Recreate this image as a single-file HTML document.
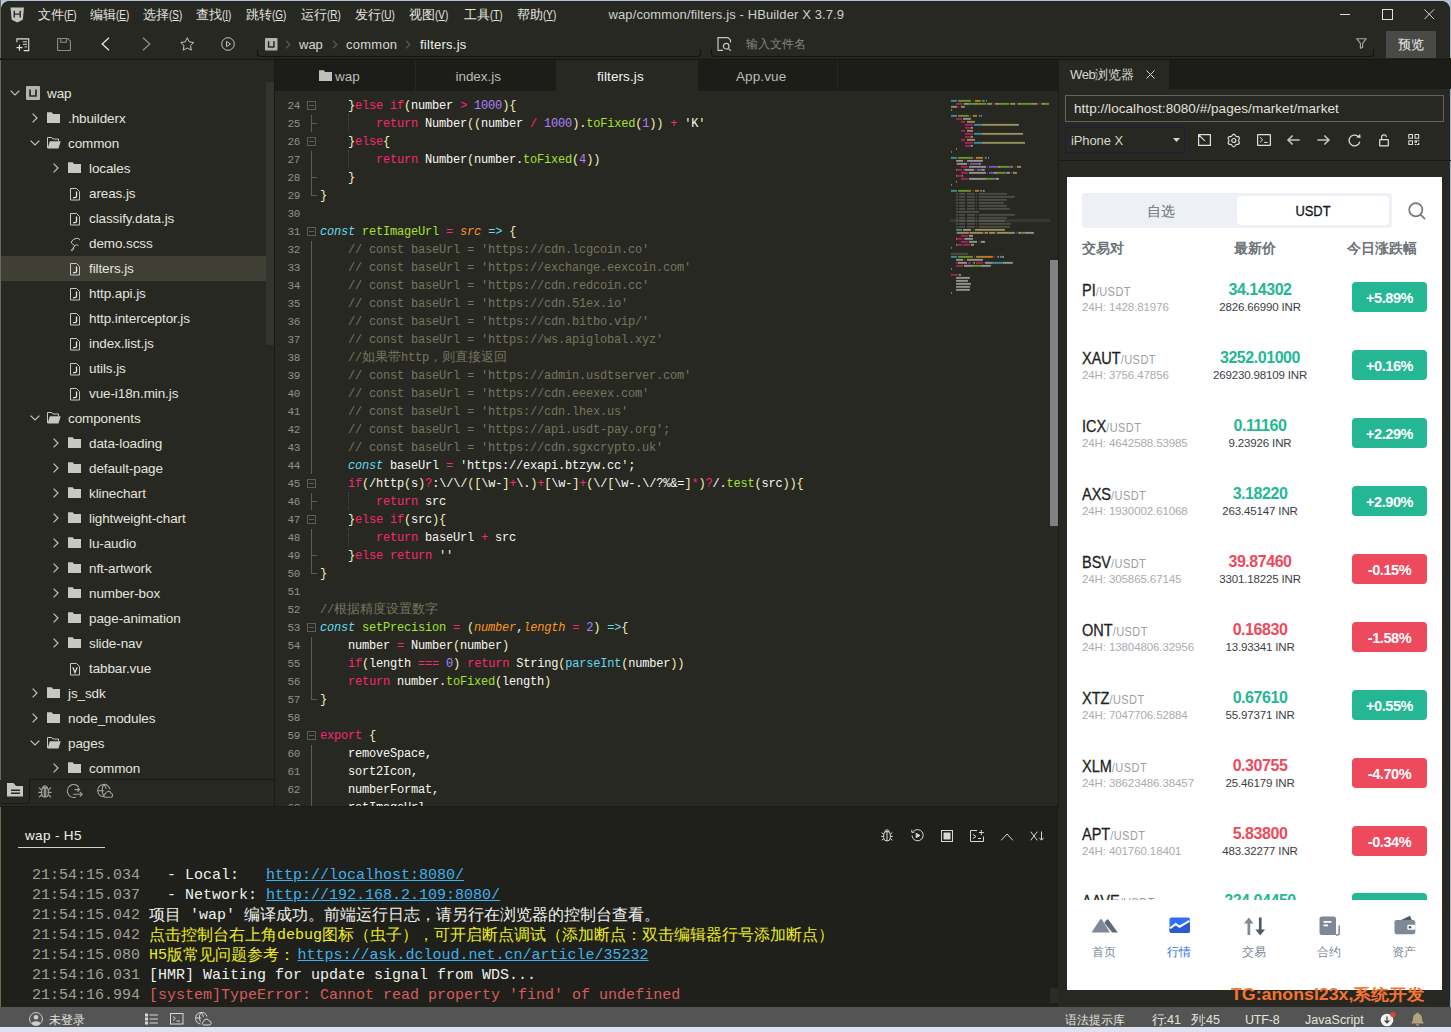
<!DOCTYPE html><html><head><meta charset="utf-8"><title>HBuilder X</title><style>
*{box-sizing:border-box;margin:0;padding:0}
html,body{width:1451px;height:1032px;overflow:hidden;background:#272822}
body{position:relative;font-family:"Liberation Sans",sans-serif;color:#d8d8d2;font-size:13px}
.abs{position:absolute}
.t{position:absolute;white-space:nowrap;line-height:1}
.cj{display:inline-block;overflow:hidden;white-space:nowrap;vertical-align:top}
svg{position:absolute;overflow:visible}
/* code */
.code{position:absolute;left:320px;top:95px;font-family:"Liberation Mono",monospace;font-size:12px;letter-spacing:-0.2px;color:#f8f8f2;white-space:pre}
.code div{height:18px;line-height:18px}
.ln{position:absolute;left:275px;top:95px;width:25px;text-align:right;font-family:"Liberation Mono",monospace;font-size:11px;letter-spacing:-0.4px;color:#8f908a}
.ln div{height:18px;line-height:18px}
.k{color:#f92672}.n{color:#ae81ff}.f{color:#a6e22e}.c{color:#66d9ef;font-style:italic}.p{color:#fd971f;font-style:italic}
.m{color:#78745f}.cjk{font-size:13px;letter-spacing:0}.y{color:#f3f0b4}.b{color:#66d9ef}
.con{position:absolute;left:32px;top:866px;font-family:"Liberation Mono",monospace;font-size:15px;color:#f0f0ea;white-space:pre}
.con div{height:20px;line-height:20px}
.ts{color:#a0a096}
.lk{color:#3eb2ee;text-decoration:underline}
.yl{color:#ecec20}.rd{color:#d75c5c}
.row{position:absolute;left:0;width:266px;height:25px}
.row .t{top:5px;font-size:14px;color:#e4e4de}
</style></head><body>
<div class="abs" style="left:0px;top:0px;width:1451px;height:1px;background:#aebfd6;"></div>
<div class="abs" style="left:0px;top:0px;width:1px;height:1032px;background:#6b6a55;"></div>
<div class="abs" style="left:1450px;top:0px;width:1px;height:1032px;background:#aab4c2;"></div>
<svg style="left:9.500px;top:7px" width="14.500" height="16" viewBox="0 0 17 19"><path d="M0.5 0.5h16l-1.4 14.6L8.5 18.5 1.9 15.1z" fill="#c2c2be"/><path d="M5 4.5v8M12 4.5v8M5 8.5h7" stroke="#272822" stroke-width="1.7" fill="none"/></svg>
<div class="t" style="left:38px;top:7.5px;font-size:13px;color:#e6e6e0;"><span class="cj" style="width:26px;">文件</span><span style="display:inline-block;transform:scaleX(0.76);transform-origin:left">(<u>F</u>)</span></div>
<div class="t" style="left:89.5px;top:7.5px;font-size:13px;color:#e6e6e0;"><span class="cj" style="width:26px;">编辑</span><span style="display:inline-block;transform:scaleX(0.76);transform-origin:left">(<u>E</u>)</span></div>
<div class="t" style="left:142.5px;top:7.5px;font-size:13px;color:#e6e6e0;"><span class="cj" style="width:26px;">选择</span><span style="display:inline-block;transform:scaleX(0.76);transform-origin:left">(<u>S</u>)</span></div>
<div class="t" style="left:195.5px;top:7.5px;font-size:13px;color:#e6e6e0;"><span class="cj" style="width:26px;">查找</span><span style="display:inline-block;transform:scaleX(0.76);transform-origin:left">(<u>I</u>)</span></div>
<div class="t" style="left:245.5px;top:7.5px;font-size:13px;color:#e6e6e0;"><span class="cj" style="width:26px;">跳转</span><span style="display:inline-block;transform:scaleX(0.76);transform-origin:left">(<u>G</u>)</span></div>
<div class="t" style="left:300.5px;top:7.5px;font-size:13px;color:#e6e6e0;"><span class="cj" style="width:26px;">运行</span><span style="display:inline-block;transform:scaleX(0.76);transform-origin:left">(<u>R</u>)</span></div>
<div class="t" style="left:354.5px;top:7.5px;font-size:13px;color:#e6e6e0;"><span class="cj" style="width:26px;">发行</span><span style="display:inline-block;transform:scaleX(0.76);transform-origin:left">(<u>U</u>)</span></div>
<div class="t" style="left:409px;top:7.5px;font-size:13px;color:#e6e6e0;"><span class="cj" style="width:26px;">视图</span><span style="display:inline-block;transform:scaleX(0.76);transform-origin:left">(<u>V</u>)</span></div>
<div class="t" style="left:463.5px;top:7.5px;font-size:13px;color:#e6e6e0;"><span class="cj" style="width:26px;">工具</span><span style="display:inline-block;transform:scaleX(0.76);transform-origin:left">(<u>T</u>)</span></div>
<div class="t" style="left:516.5px;top:7.5px;font-size:13px;color:#e6e6e0;"><span class="cj" style="width:26px;">帮助</span><span style="display:inline-block;transform:scaleX(0.76);transform-origin:left">(<u>Y</u>)</span></div>
<div class="t" style="left:608.5px;top:8px;font-size:13px;color:#d0d0ca;letter-spacing:0.11px">wap/common/filters.js - HBuilder X 3.7.9</div>
<div class="abs" style="left:1340px;top:14px;width:10px;height:1px;background:#e0e0da;"></div>
<div class="abs" style="left:1382px;top:9px;width:10.500px;height:10.500px;border:1px solid #e0e0da"></div>
<svg style="left:1424px;top:8.700px" width="10.500" height="10.500" viewBox="0 0 12 12"><path d="M0.5 0.5l11 11M11.5 0.5l-11 11" stroke="#e0e0da" stroke-width="1.1" fill="none"/></svg>
<div class="abs" style="left:0px;top:58px;width:1451px;height:1px;background:#22231d;"></div>
<div class="abs" style="left:0px;top:59px;width:1451px;height:1px;background:#171813;"></div>
<svg style="left:16px;top:37.500px" width="14.500" height="13.500" viewBox="0 0 17 16" fill="none" stroke="#e0e0da" stroke-width="1.3"><path d="M1 5V1h14v14H9"/><path d="M8 4.5h5M8 7.5h5M10 10.5h3" stroke-width="1.1"/><path d="M4 8v7M0.5 11.5h7" stroke-width="1.4"/></svg>
<svg style="left:57px;top:37.500px" width="14" height="13" viewBox="0 0 15 14" fill="none" stroke="#8b8b85" stroke-width="1.2"><path d="M0.6 0.6h11l2.8 2.8v10H0.6z"/><path d="M4 0.6v4h6v-4"/></svg>
<svg style="left:101px;top:37px" width="9" height="14" viewBox="0 0 9 14" fill="none" stroke="#e0e0da" stroke-width="1.4"><path d="M8 0.7L1.2 7 8 13.3"/></svg>
<svg style="left:142px;top:37px" width="9" height="14" viewBox="0 0 9 14" fill="none" stroke="#8b8b85" stroke-width="1.4"><path d="M1 0.7L7.8 7 1 13.3"/></svg>
<svg style="left:180px;top:37px" width="14.500" height="13.500" viewBox="0 0 16 15" fill="none" stroke="#c8c8c2" stroke-width="1.1" stroke-linejoin="round"><path d="M8 0.8l2.2 4.6 5 .7-3.6 3.5.9 5L8 12.2 3.5 14.6l.9-5L.8 6.1l5-.7z"/></svg>
<svg style="left:221px;top:37px" width="14" height="14" viewBox="0 0 16 16" fill="none" stroke="#c8c8c2" stroke-width="1.1" stroke-linejoin="round"><circle cx="8" cy="8" r="7.2"/><path d="M6.3 5l4.6 3-4.6 3z"/></svg>
<div class="abs" style="left:257px;top:49px;width:444px;height:8px;border:1px solid #12130e;border-top:none;border-radius:0 0 4px 4px"></div>
<div class="abs" style="left:711px;top:49px;width:663px;height:8px;border:1px solid #12130e;border-top:none;border-radius:0 0 4px 4px"></div>
<svg style="left:264.500px;top:38.200px" width="12.500" height="12.500" viewBox="0 0 14 14"><rect width="14" height="14" rx="1" fill="#b4b4ae"/><path d="M4 3.5v6.5h6V3.5" stroke="#272822" stroke-width="1.7" fill="none"/></svg>
<svg style="left:285px;top:40px" width="6" height="9" viewBox="0 0 6 9" fill="none" stroke="#5d5e58" stroke-width="1.1"><path d="M1 0.7l3.8 3.8L1 8.3"/></svg>
<svg style="left:332px;top:40px" width="6" height="9" viewBox="0 0 6 9" fill="none" stroke="#5d5e58" stroke-width="1.1"><path d="M1 0.7l3.8 3.8L1 8.3"/></svg>
<svg style="left:405px;top:40px" width="6" height="9" viewBox="0 0 6 9" fill="none" stroke="#5d5e58" stroke-width="1.1"><path d="M1 0.7l3.8 3.8L1 8.3"/></svg>
<div class="t" style="left:299px;top:38px;font-size:13px;color:#d8d8d2;">wap</div>
<div class="t" style="left:346px;top:38px;font-size:13px;color:#d8d8d2;letter-spacing:0.25px">common</div>
<div class="t" style="left:420px;top:38px;font-size:13px;color:#f0f0ea;letter-spacing:0.25px">filters.js</div>
<svg style="left:717px;top:37px" width="15" height="15" viewBox="0 0 15 15" fill="none" stroke="#c8c8c2" stroke-width="1.2"><path d="M13.5 5.5V3.2L11 0.7H1v12.6h5"/><circle cx="9.2" cy="9.2" r="2.8"/><path d="M11.3 11.3l2.5 2.5"/></svg>
<div class="t" style="left:746px;top:38px;font-size:12px;color:#85857f;"><span class="cj" style="width:60px;">输入文件名</span></div>
<svg style="left:1356px;top:38px" width="11" height="11" viewBox="0 0 11 11" fill="none" stroke="#a8a8a2" stroke-width="1.1" stroke-linejoin="round"><path d="M0.7 0.7h9.6L6.6 5.4v4.2L4.4 10.3V5.4z"/></svg>
<div class="abs" style="left:1386px;top:31px;width:50px;height:27px;background:#494948;"></div>
<div class="t" style="left:1398px;top:38px;font-size:13px;color:#f0f0ea;"><span class="cj" style="width:26px;">预览</span></div>
<div class="abs" style="left:1px;top:1px;width:8px;height:8px;background:radial-gradient(circle at 100% 100%,transparent 7.500px,#b7c6da 8.300px)"></div>
<div class="abs" style="left:1442px;top:1px;width:8px;height:8px;background:radial-gradient(circle at 0 100%,transparent 7.500px,#b7c6da 8.300px)"></div>
<div class="abs" style="left:1px;top:256px;width:265px;height:25px;background:#3f3f35;"></div>
<svg style="left:9.8px;top:90px" width="10" height="6" viewBox="0 0 10 6" fill="none" stroke="#c4c4be" stroke-width="1.2"><path d="M0.6 0.6L5 5l4.4-4.4"/></svg>
<svg style="left:26px;top:86px" width="14" height="14" viewBox="0 0 14 14"><rect width="14" height="14" rx="1" fill="#b4b4ae"/><path d="M4 3.5v6.5h6V3.5" stroke="#272822" stroke-width="1.7" fill="none"/></svg>
<div class="t" style="left:47px;top:86.5px;font-size:13.5px;color:#e4e4de;letter-spacing:-0.1px">wap</div>
<svg style="left:31.799999999999997px;top:113px" width="6" height="10" viewBox="0 0 6 10" fill="none" stroke="#c4c4be" stroke-width="1.2"><path d="M0.6 0.6L5 5 0.6 9.4"/></svg>
<svg style="left:47px;top:112px" width="13" height="11" viewBox="0 0 13 11"><path d="M0 0.3h4.8l1.2 1.7h7v9H0z" fill="#c8c8c2"/></svg>
<div class="t" style="left:68px;top:111.5px;font-size:13.5px;color:#e4e4de;letter-spacing:-0.1px">.hbuilderx</div>
<svg style="left:29.799999999999997px;top:140px" width="10" height="6" viewBox="0 0 10 6" fill="none" stroke="#c4c4be" stroke-width="1.2"><path d="M0.6 0.6L5 5l4.4-4.4"/></svg>
<svg style="left:47px;top:137px" width="14" height="12" viewBox="0 0 14 12"><path d="M0.5 11V0.5h4.3l1.2 1.5h5.5v2" fill="none" stroke="#c8c8c2" stroke-width="1"/><path d="M0.6 11.5L2.8 4.2h10.9L11.5 11.5z" fill="#c8c8c2"/></svg>
<div class="t" style="left:68px;top:136.5px;font-size:13.5px;color:#e4e4de;letter-spacing:-0.1px">common</div>
<svg style="left:52.8px;top:163px" width="6" height="10" viewBox="0 0 6 10" fill="none" stroke="#c4c4be" stroke-width="1.2"><path d="M0.6 0.6L5 5 0.6 9.4"/></svg>
<svg style="left:68px;top:162px" width="13" height="11" viewBox="0 0 13 11"><path d="M0 0.3h4.8l1.2 1.7h7v9H0z" fill="#c8c8c2"/></svg>
<div class="t" style="left:89px;top:161.5px;font-size:13.5px;color:#e4e4de;letter-spacing:-0.1px">locales</div>
<svg style="left:70px;top:187.5px" width="10" height="12.500" viewBox="0 0 10 12.500" fill="none" stroke="#c8c8c2" stroke-width="1"><path d="M0.500 0.500h6l3 3v8.500h-9z"/><path d="M6.500 3.600v4.600q0 1.400-1.500 1.400H3" stroke-width="1.300" stroke="#e6e6e0"/></svg>
<div class="t" style="left:89px;top:186.5px;font-size:13.5px;color:#e4e4de;letter-spacing:-0.1px">areas.js</div>
<svg style="left:70px;top:212.5px" width="10" height="12.500" viewBox="0 0 10 12.500" fill="none" stroke="#c8c8c2" stroke-width="1"><path d="M0.500 0.500h6l3 3v8.500h-9z"/><path d="M6.500 3.600v4.600q0 1.400-1.500 1.400H3" stroke-width="1.300" stroke="#e6e6e0"/></svg>
<div class="t" style="left:89px;top:211.5px;font-size:13.5px;color:#e4e4de;letter-spacing:-0.1px">classify.data.js</div>
<svg style="left:69px;top:236.5px" width="12" height="14" viewBox="0 0 12 14" fill="none" stroke="#c8c8c2" stroke-width="1"><path d="M10.600 3.200C11 1.600 8.600 0.800 6 1.800 3.400 2.800 1.700 4.900 2.500 6.100c.8 1.200 2.700 1.400 3.100 2.600.4 1.200-.9 2-2.100 3-1.200 1-1.700 1.800-.9 2 .8.200 2-1.200 2-2.400 0-1.200-.6-1.800-.6-1.800M5.600 8.700c1.200-.9 3-1.100 3.800-.1"/></svg>
<div class="t" style="left:89px;top:236.5px;font-size:13.5px;color:#e4e4de;letter-spacing:-0.1px">demo.scss</div>
<svg style="left:70px;top:262.5px" width="10" height="12.500" viewBox="0 0 10 12.500" fill="none" stroke="#c8c8c2" stroke-width="1"><path d="M0.500 0.500h6l3 3v8.500h-9z"/><path d="M6.500 3.600v4.600q0 1.400-1.500 1.400H3" stroke-width="1.300" stroke="#e6e6e0"/></svg>
<div class="t" style="left:89px;top:261.5px;font-size:13.5px;color:#e4e4de;letter-spacing:-0.1px">filters.js</div>
<svg style="left:70px;top:287.5px" width="10" height="12.500" viewBox="0 0 10 12.500" fill="none" stroke="#c8c8c2" stroke-width="1"><path d="M0.500 0.500h6l3 3v8.500h-9z"/><path d="M6.500 3.600v4.600q0 1.400-1.500 1.400H3" stroke-width="1.300" stroke="#e6e6e0"/></svg>
<div class="t" style="left:89px;top:286.5px;font-size:13.5px;color:#e4e4de;letter-spacing:-0.1px">http.api.js</div>
<svg style="left:70px;top:312.5px" width="10" height="12.500" viewBox="0 0 10 12.500" fill="none" stroke="#c8c8c2" stroke-width="1"><path d="M0.500 0.500h6l3 3v8.500h-9z"/><path d="M6.500 3.600v4.600q0 1.400-1.500 1.400H3" stroke-width="1.300" stroke="#e6e6e0"/></svg>
<div class="t" style="left:89px;top:311.5px;font-size:13.5px;color:#e4e4de;letter-spacing:-0.1px">http.interceptor.js</div>
<svg style="left:70px;top:337.5px" width="10" height="12.500" viewBox="0 0 10 12.500" fill="none" stroke="#c8c8c2" stroke-width="1"><path d="M0.500 0.500h6l3 3v8.500h-9z"/><path d="M6.500 3.600v4.600q0 1.400-1.500 1.400H3" stroke-width="1.300" stroke="#e6e6e0"/></svg>
<div class="t" style="left:89px;top:336.5px;font-size:13.5px;color:#e4e4de;letter-spacing:-0.1px">index.list.js</div>
<svg style="left:70px;top:362.5px" width="10" height="12.500" viewBox="0 0 10 12.500" fill="none" stroke="#c8c8c2" stroke-width="1"><path d="M0.500 0.500h6l3 3v8.500h-9z"/><path d="M6.500 3.600v4.600q0 1.400-1.500 1.400H3" stroke-width="1.300" stroke="#e6e6e0"/></svg>
<div class="t" style="left:89px;top:361.5px;font-size:13.5px;color:#e4e4de;letter-spacing:-0.1px">utils.js</div>
<svg style="left:70px;top:387.5px" width="10" height="12.500" viewBox="0 0 10 12.500" fill="none" stroke="#c8c8c2" stroke-width="1"><path d="M0.500 0.500h6l3 3v8.500h-9z"/><path d="M6.500 3.600v4.600q0 1.400-1.500 1.400H3" stroke-width="1.300" stroke="#e6e6e0"/></svg>
<div class="t" style="left:89px;top:386.5px;font-size:13.5px;color:#e4e4de;letter-spacing:-0.1px">vue-i18n.min.js</div>
<svg style="left:29.799999999999997px;top:415px" width="10" height="6" viewBox="0 0 10 6" fill="none" stroke="#c4c4be" stroke-width="1.2"><path d="M0.6 0.6L5 5l4.4-4.4"/></svg>
<svg style="left:47px;top:412px" width="14" height="12" viewBox="0 0 14 12"><path d="M0.5 11V0.5h4.3l1.2 1.5h5.5v2" fill="none" stroke="#c8c8c2" stroke-width="1"/><path d="M0.6 11.5L2.8 4.2h10.9L11.5 11.5z" fill="#c8c8c2"/></svg>
<div class="t" style="left:68px;top:411.5px;font-size:13.5px;color:#e4e4de;letter-spacing:-0.1px">components</div>
<svg style="left:52.8px;top:438px" width="6" height="10" viewBox="0 0 6 10" fill="none" stroke="#c4c4be" stroke-width="1.2"><path d="M0.6 0.6L5 5 0.6 9.4"/></svg>
<svg style="left:68px;top:437px" width="13" height="11" viewBox="0 0 13 11"><path d="M0 0.3h4.8l1.2 1.7h7v9H0z" fill="#c8c8c2"/></svg>
<div class="t" style="left:89px;top:436.5px;font-size:13.5px;color:#e4e4de;letter-spacing:-0.1px">data-loading</div>
<svg style="left:52.8px;top:463px" width="6" height="10" viewBox="0 0 6 10" fill="none" stroke="#c4c4be" stroke-width="1.2"><path d="M0.6 0.6L5 5 0.6 9.4"/></svg>
<svg style="left:68px;top:462px" width="13" height="11" viewBox="0 0 13 11"><path d="M0 0.3h4.8l1.2 1.7h7v9H0z" fill="#c8c8c2"/></svg>
<div class="t" style="left:89px;top:461.5px;font-size:13.5px;color:#e4e4de;letter-spacing:-0.1px">default-page</div>
<svg style="left:52.8px;top:488px" width="6" height="10" viewBox="0 0 6 10" fill="none" stroke="#c4c4be" stroke-width="1.2"><path d="M0.6 0.6L5 5 0.6 9.4"/></svg>
<svg style="left:68px;top:487px" width="13" height="11" viewBox="0 0 13 11"><path d="M0 0.3h4.8l1.2 1.7h7v9H0z" fill="#c8c8c2"/></svg>
<div class="t" style="left:89px;top:486.5px;font-size:13.5px;color:#e4e4de;letter-spacing:-0.1px">klinechart</div>
<svg style="left:52.8px;top:513px" width="6" height="10" viewBox="0 0 6 10" fill="none" stroke="#c4c4be" stroke-width="1.2"><path d="M0.6 0.6L5 5 0.6 9.4"/></svg>
<svg style="left:68px;top:512px" width="13" height="11" viewBox="0 0 13 11"><path d="M0 0.3h4.8l1.2 1.7h7v9H0z" fill="#c8c8c2"/></svg>
<div class="t" style="left:89px;top:511.5px;font-size:13.5px;color:#e4e4de;letter-spacing:-0.1px">lightweight-chart</div>
<svg style="left:52.8px;top:538px" width="6" height="10" viewBox="0 0 6 10" fill="none" stroke="#c4c4be" stroke-width="1.2"><path d="M0.6 0.6L5 5 0.6 9.4"/></svg>
<svg style="left:68px;top:537px" width="13" height="11" viewBox="0 0 13 11"><path d="M0 0.3h4.8l1.2 1.7h7v9H0z" fill="#c8c8c2"/></svg>
<div class="t" style="left:89px;top:536.5px;font-size:13.5px;color:#e4e4de;letter-spacing:-0.1px">lu-audio</div>
<svg style="left:52.8px;top:563px" width="6" height="10" viewBox="0 0 6 10" fill="none" stroke="#c4c4be" stroke-width="1.2"><path d="M0.6 0.6L5 5 0.6 9.4"/></svg>
<svg style="left:68px;top:562px" width="13" height="11" viewBox="0 0 13 11"><path d="M0 0.3h4.8l1.2 1.7h7v9H0z" fill="#c8c8c2"/></svg>
<div class="t" style="left:89px;top:561.5px;font-size:13.5px;color:#e4e4de;letter-spacing:-0.1px">nft-artwork</div>
<svg style="left:52.8px;top:588px" width="6" height="10" viewBox="0 0 6 10" fill="none" stroke="#c4c4be" stroke-width="1.2"><path d="M0.6 0.6L5 5 0.6 9.4"/></svg>
<svg style="left:68px;top:587px" width="13" height="11" viewBox="0 0 13 11"><path d="M0 0.3h4.8l1.2 1.7h7v9H0z" fill="#c8c8c2"/></svg>
<div class="t" style="left:89px;top:586.5px;font-size:13.5px;color:#e4e4de;letter-spacing:-0.1px">number-box</div>
<svg style="left:52.8px;top:613px" width="6" height="10" viewBox="0 0 6 10" fill="none" stroke="#c4c4be" stroke-width="1.2"><path d="M0.6 0.6L5 5 0.6 9.4"/></svg>
<svg style="left:68px;top:612px" width="13" height="11" viewBox="0 0 13 11"><path d="M0 0.3h4.8l1.2 1.7h7v9H0z" fill="#c8c8c2"/></svg>
<div class="t" style="left:89px;top:611.5px;font-size:13.5px;color:#e4e4de;letter-spacing:-0.1px">page-animation</div>
<svg style="left:52.8px;top:638px" width="6" height="10" viewBox="0 0 6 10" fill="none" stroke="#c4c4be" stroke-width="1.2"><path d="M0.6 0.6L5 5 0.6 9.4"/></svg>
<svg style="left:68px;top:637px" width="13" height="11" viewBox="0 0 13 11"><path d="M0 0.3h4.8l1.2 1.7h7v9H0z" fill="#c8c8c2"/></svg>
<div class="t" style="left:89px;top:636.5px;font-size:13.5px;color:#e4e4de;letter-spacing:-0.1px">slide-nav</div>
<svg style="left:70px;top:662.5px" width="10" height="12.500" viewBox="0 0 10 12.500" fill="none" stroke="#c8c8c2" stroke-width="1"><path d="M0.500 0.500h6l3 3v8.500h-9z"/><path d="M2.800 4.200l2.200 5.400 2.200-5.400" stroke-width="1.200" stroke="#e0e0da"/></svg>
<div class="t" style="left:89px;top:661.5px;font-size:13.5px;color:#e4e4de;letter-spacing:-0.1px">tabbar.vue</div>
<svg style="left:31.799999999999997px;top:688px" width="6" height="10" viewBox="0 0 6 10" fill="none" stroke="#c4c4be" stroke-width="1.2"><path d="M0.6 0.6L5 5 0.6 9.4"/></svg>
<svg style="left:47px;top:687px" width="13" height="11" viewBox="0 0 13 11"><path d="M0 0.3h4.8l1.2 1.7h7v9H0z" fill="#c8c8c2"/></svg>
<div class="t" style="left:68px;top:686.5px;font-size:13.5px;color:#e4e4de;letter-spacing:-0.1px">js_sdk</div>
<svg style="left:31.799999999999997px;top:713px" width="6" height="10" viewBox="0 0 6 10" fill="none" stroke="#c4c4be" stroke-width="1.2"><path d="M0.6 0.6L5 5 0.6 9.4"/></svg>
<svg style="left:47px;top:712px" width="13" height="11" viewBox="0 0 13 11"><path d="M0 0.3h4.8l1.2 1.7h7v9H0z" fill="#c8c8c2"/></svg>
<div class="t" style="left:68px;top:711.5px;font-size:13.5px;color:#e4e4de;letter-spacing:-0.1px">node_modules</div>
<svg style="left:29.799999999999997px;top:740px" width="10" height="6" viewBox="0 0 10 6" fill="none" stroke="#c4c4be" stroke-width="1.2"><path d="M0.6 0.6L5 5l4.4-4.4"/></svg>
<svg style="left:47px;top:737px" width="14" height="12" viewBox="0 0 14 12"><path d="M0.5 11V0.5h4.3l1.2 1.5h5.5v2" fill="none" stroke="#c8c8c2" stroke-width="1"/><path d="M0.6 11.5L2.8 4.2h10.9L11.5 11.5z" fill="#c8c8c2"/></svg>
<div class="t" style="left:68px;top:736.5px;font-size:13.5px;color:#e4e4de;letter-spacing:-0.1px">pages</div>
<svg style="left:52.8px;top:763px" width="6" height="10" viewBox="0 0 6 10" fill="none" stroke="#c4c4be" stroke-width="1.2"><path d="M0.6 0.6L5 5 0.6 9.4"/></svg>
<svg style="left:68px;top:762px" width="13" height="11" viewBox="0 0 13 11"><path d="M0 0.3h4.8l1.2 1.7h7v9H0z" fill="#c8c8c2"/></svg>
<div class="t" style="left:89px;top:761.5px;font-size:13.5px;color:#e4e4de;letter-spacing:-0.1px">common</div>
<div class="abs" style="left:266px;top:82px;width:8px;height:263px;background:#33342d;"></div>
<div class="abs" style="left:0px;top:780px;width:275px;height:26px;background:#272822;"></div>
<div class="abs" style="left:30px;top:779px;width:245px;height:1px;background:#171813;"></div>
<div class="abs" style="left:1px;top:779px;width:29px;height:24.500px;border-right:1px solid #171813;border-bottom:1px solid #171813;border-radius:0 0 4px 0"></div>
<svg style="left:7px;top:783px" width="16" height="13.500" viewBox="0 0 16 13.500"><path d="M0 0h6.500l2.500 3h7v10.500H0z" fill="#c6c6c2"/><path d="M4 7.300h9M4 10.300h9" stroke="#272822" stroke-width="1.500"/></svg>
<svg style="left:38px;top:784px" width="14" height="14" viewBox="0 0 14 14" fill="none" stroke="#a2a29c" stroke-width="1.100" stroke-linecap="round"><path d="M3.700 6.700a3.300 3.300 0 0 1 6.600 0v3a3.300 3.300 0 0 1-6.600 0z"/><path d="M4.900 3.900a2.100 2.100 0 0 1 4.200 0M6.300 4v8.800M7.700 4v8.800M3.700 6.200L1.300 3.800M3.700 8.400H0.800M3.700 10.600l-2.400 2.400M10.300 6.200l2.400-2.400M10.300 8.400h2.900M10.300 10.600l2.400 2.400"/></svg>
<svg style="left:67px;top:784px" width="16" height="14" viewBox="0 0 16 14" fill="none" stroke="#a2a29c" stroke-width="1.100" stroke-linecap="round"><path d="M11.300 2.500A6.400 6.400 0 1 0 8.500 13.200"/><path d="M8 5.600h4.600M10.800 3.800l1.900 1.800-1.900 1.800M6.500 10.300h8.600M13.200 8.300l2 2-2 2"/></svg>
<svg style="left:97px;top:784px" width="16" height="14" viewBox="0 0 16 14" fill="none" stroke="#a2a29c" stroke-width="1.100" stroke-linecap="round"><path d="M6.500 12.800A6.200 6.200 0 1 1 12.900 5.200"/><path d="M0.800 6.800h6M6.800 0.700c-2.200 2.800-2.200 8 0 11M6.800 0.700c1.400 1.200 2 2.600 2.300 4"/><path d="M8.600 13.300h5.200a2.100 2.100 0 0 0 .3-4.100 3 3 0 0 0-5.700.700 1.700 1.700 0 0 0 .2 3.400z"/></svg>
<div class="abs" style="left:0px;top:806px;width:1059px;height:1px;background:#1a1b17;"></div>
<div class="abs" style="left:275px;top:60px;width:784px;height:31px;background:#1c1d19;"></div>
<div class="abs" style="left:274px;top:60px;width:1px;height:746px;background:#191a15;"></div>
<div class="abs" style="left:415px;top:60px;width:1px;height:31px;background:#252620;"></div>
<div class="abs" style="left:556px;top:60px;width:1px;height:31px;background:#252620;"></div>
<div class="abs" style="left:557px;top:60px;width:141px;height:31px;background:#272822;"></div>
<div class="abs" style="left:837px;top:60px;width:1px;height:31px;background:#252620;"></div>
<div class="t" style="left:335px;top:69.5px;font-size:13.5px;color:#bcbcb6;">wap</div>
<svg style="left:319px;top:70px" width="13" height="11" viewBox="0 0 13 11"><path d="M0 0.300h4.800l1.200 1.700h7v9H0z" fill="#c0c0ba"/></svg>
<div class="t" style="left:455.5px;top:69.5px;font-size:13.5px;color:#bcbcb6;letter-spacing:-0.05px">index.js</div>
<div class="t" style="left:597px;top:69.5px;font-size:13.5px;color:#f4f4ee;letter-spacing:0.1px">filters.js</div>
<div class="t" style="left:736px;top:69.5px;font-size:13.5px;color:#bcbcb6;letter-spacing:0.1px">App.vue</div>
<div class="abs" style="left:275px;top:91px;width:785px;height:715px;overflow:hidden">
<div class="ln" style="left:0;top:6px"><div>24</div><div>25</div><div>26</div><div>27</div><div>28</div><div>29</div><div>30</div><div>31</div><div>32</div><div>33</div><div>34</div><div>35</div><div>36</div><div>37</div><div>38</div><div>39</div><div>40</div><div>41</div><div>42</div><div>43</div><div>44</div><div>45</div><div>46</div><div>47</div><div>48</div><div>49</div><div>50</div><div>51</div><div>52</div><div>53</div><div>54</div><div>55</div><div>56</div><div>57</div><div>58</div><div>59</div><div>60</div><div>61</div><div>62</div><div>63</div></div>
<div class="code" style="left:45px;top:6px"><div>    <span class="y">}</span><span class="k">else if</span><span class="y">(</span>number <span class="k">&gt;</span> <span class="n">1000</span><span class="y">){</span></div><div>        <span class="k">return</span> Number<span class="y">((</span>number <span class="k">/</span> <span class="n">1000</span><span class="y">)</span>.<span class="f">toFixed</span><span class="y">(</span><span class="n">1</span><span class="y">))</span> <span class="k">+</span> <span class="y">&#x27;</span>K<span class="y">&#x27;</span></div><div>    <span class="y">}</span><span class="k">else</span><span class="y">{</span></div><div>        <span class="k">return</span> Number<span class="y">(</span>number.<span class="f">toFixed</span><span class="y">(</span><span class="n">4</span><span class="y">))</span></div><div>    <span class="y">}</span></div><div><span class="y">}</span></div><div></div><div><span class="c">const</span> <span class="f">retImageUrl</span> <span class="k">=</span> <span class="p">src</span> <span class="c">=&gt;</span> <span class="y">{</span></div><div>    <span class="m">// const baseUrl = &#x27;https://cdn.lcgcoin.co&#x27;</span></div><div>    <span class="m">// const baseUrl = &#x27;https://exchange.eexcoin.com&#x27;</span></div><div>    <span class="m">// const baseUrl = &#x27;https://cdn.redcoin.cc&#x27;</span></div><div>    <span class="m">// const baseUrl = &#x27;https://cdn.51ex.io&#x27;</span></div><div>    <span class="m">// const baseUrl = &#x27;https://cdn.bitbo.vip/&#x27;</span></div><div>    <span class="m">// const baseUrl = &#x27;https://ws.apiglobal.xyz&#x27;</span></div><div>    <span class="m">//</span><span class="m cjk"><span class="cj" style="width:39px;">如果带</span></span><span class="m">http</span><span class="m cjk"><span class="cj" style="width:78px;">，则直接返回</span></span></div><div>    <span class="m">// const baseUrl = &#x27;https://admin.usdtserver.com&#x27;</span></div><div>    <span class="m">// const baseUrl = &#x27;https://cdn.eeexex.com&#x27;</span></div><div>    <span class="m">// const baseUrl = &#x27;https://cdn.lhex.us&#x27;</span></div><div>    <span class="m">// const baseUrl = &#x27;https://api.usdt-pay.org&#x27;;</span></div><div>    <span class="m">// const baseUrl = &#x27;https://cdn.sgxcrypto.uk&#x27;</span></div><div>    <span class="c">const</span> baseUrl <span class="k">=</span> <span class="y">&#x27;</span>https://exapi.btzyw.cc<span class="y">&#x27;</span>;</div><div>    <span class="k">if</span><span class="y">(</span>/http<span class="y">(</span>s<span class="y">)</span><span class="k">?</span>:\/\/<span class="y">([</span>\w-<span class="y">]</span><span class="k">+</span>\.<span class="y">)</span><span class="k">+</span><span class="y">[</span>\w-<span class="y">]</span><span class="k">+</span><span class="y">(</span>\/<span class="y">[</span>\w-.\/?%&amp;=<span class="y">]</span><span class="k">*</span><span class="y">)</span><span class="k">?</span>/.<span class="f">test</span><span class="y">(</span>src<span class="y">)){</span></div><div>        <span class="k">return</span> src</div><div>    <span class="y">}</span><span class="k">else if</span><span class="y">(</span>src<span class="y">){</span></div><div>        <span class="k">return</span> baseUrl <span class="k">+</span> src</div><div>    <span class="y">}</span><span class="k">else return</span> <span class="y">&#x27;&#x27;</span></div><div><span class="y">}</span></div><div></div><div><span class="m">//</span><span class="m cjk"><span class="cj" style="width:104px;">根据精度设置数字</span></span></div><div><span class="c">const</span> <span class="f">setPrecision</span> <span class="k">=</span> <span class="y">(</span><span class="p">number</span>,<span class="p">length</span> <span class="k">=</span> <span class="n">2</span><span class="y">)</span> <span class="c">=&gt;</span><span class="y">{</span></div><div>    number <span class="k">=</span> Number<span class="y">(</span>number<span class="y">)</span></div><div>    <span class="k">if</span><span class="y">(</span>length <span class="k">===</span> <span class="n">0</span><span class="y">)</span> <span class="k">return</span> String<span class="y">(</span><span class="b">parseInt</span><span class="y">(</span>number<span class="y">))</span></div><div>    <span class="k">return</span> number.<span class="f">toFixed</span><span class="y">(</span>length<span class="y">)</span></div><div><span class="y">}</span></div><div></div><div><span class="k">export</span> <span class="y">{</span></div><div>    removeSpace,</div><div>    sort2Icon,</div><div>    numberFormat,</div><div>    retImageUrl,</div></div>
<div class="abs" style="left:32px;top:10px;width:9px;height:9px;border:1px solid #5c5d57"></div>
<div class="abs" style="left:34px;top:14px;width:5px;height:1px;background:#5c5d57"></div>
<div class="abs" style="left:32px;top:46px;width:9px;height:9px;border:1px solid #5c5d57"></div>
<div class="abs" style="left:34px;top:50px;width:5px;height:1px;background:#5c5d57"></div>
<div class="abs" style="left:32px;top:136px;width:9px;height:9px;border:1px solid #5c5d57"></div>
<div class="abs" style="left:34px;top:140px;width:5px;height:1px;background:#5c5d57"></div>
<div class="abs" style="left:32px;top:388px;width:9px;height:9px;border:1px solid #5c5d57"></div>
<div class="abs" style="left:34px;top:392px;width:5px;height:1px;background:#5c5d57"></div>
<div class="abs" style="left:32px;top:424px;width:9px;height:9px;border:1px solid #5c5d57"></div>
<div class="abs" style="left:34px;top:428px;width:5px;height:1px;background:#5c5d57"></div>
<div class="abs" style="left:32px;top:532px;width:9px;height:9px;border:1px solid #5c5d57"></div>
<div class="abs" style="left:34px;top:536px;width:5px;height:1px;background:#5c5d57"></div>
<div class="abs" style="left:32px;top:640px;width:9px;height:9px;border:1px solid #5c5d57"></div>
<div class="abs" style="left:34px;top:644px;width:5px;height:1px;background:#5c5d57"></div>
<div class="abs" style="left:36px;top:24px;width:1px;height:17px;background:#5c5d57"></div>
<div class="abs" style="left:36px;top:32px;width:6px;height:1px;background:#5c5d57"></div>
<div class="abs" style="left:36px;top:60px;width:1px;height:35px;background:#5c5d57"></div>
<div class="abs" style="left:36px;top:86px;width:6px;height:1px;background:#5c5d57"></div>
<div class="abs" style="left:36px;top:95px;width:1px;height:9px;background:#5c5d57"></div>
<div class="abs" style="left:36px;top:104px;width:6px;height:1px;background:#5c5d57"></div>
<div class="abs" style="left:36px;top:150px;width:1px;height:233px;background:#5c5d57"></div>
<div class="abs" style="left:36px;top:402px;width:1px;height:17px;background:#5c5d57"></div>
<div class="abs" style="left:36px;top:410px;width:6px;height:1px;background:#5c5d57"></div>
<div class="abs" style="left:36px;top:438px;width:1px;height:35px;background:#5c5d57"></div>
<div class="abs" style="left:36px;top:464px;width:6px;height:1px;background:#5c5d57"></div>
<div class="abs" style="left:36px;top:473px;width:1px;height:9px;background:#5c5d57"></div>
<div class="abs" style="left:36px;top:482px;width:6px;height:1px;background:#5c5d57"></div>
<div class="abs" style="left:36px;top:546px;width:1px;height:53px;background:#5c5d57"></div>
<div class="abs" style="left:36px;top:599px;width:1px;height:9px;background:#5c5d57"></div>
<div class="abs" style="left:36px;top:608px;width:6px;height:1px;background:#5c5d57"></div>
<div class="abs" style="left:36px;top:654px;width:1px;height:71px;background:#5c5d57"></div>
<div class="abs" style="left:73px;top:23px;width:0;height:18px;border-left:1px dotted #4a4b44"></div>
<div class="abs" style="left:73px;top:59px;width:0;height:18px;border-left:1px dotted #4a4b44"></div>
<div class="abs" style="left:73px;top:401px;width:0;height:18px;border-left:1px dotted #4a4b44"></div>
<div class="abs" style="left:73px;top:437px;width:0;height:18px;border-left:1px dotted #4a4b44"></div>
</div>
<svg style="left:940px;top:90px" width="110" height="215" viewBox="0 0 110 215"><rect x="11.0" y="9.9" width="5.9" height="1.9" fill="#3e8c9c"/><rect x="18.1" y="9.9" width="12.8" height="1.9" fill="#6b9426"/><rect x="33.2" y="9.9" width="0.6" height="1.9" fill="#a3245a"/><rect x="35.0" y="9.9" width="5.7" height="1.9" fill="#bd7a22"/><rect x="41.9" y="9.9" width="2.8" height="1.9" fill="#3e8c9c"/><rect x="46.0" y="9.9" width="0.8" height="1.9" fill="#94948e"/><rect x="16.1" y="12.9" width="6.9" height="1.9" fill="#a3245a"/><rect x="24.0" y="12.9" width="4.9" height="1.9" fill="#94948e"/><rect x="28.9" y="12.9" width="5.7" height="1.9" fill="#6b9426"/><rect x="34.6" y="12.9" width="2.4" height="1.9" fill="#94948e"/><rect x="37.0" y="12.9" width="9.4" height="1.9" fill="#6b9426"/><rect x="47.2" y="12.9" width="4.9" height="1.9" fill="#96915a"/><rect x="52.9" y="12.9" width="0.8" height="1.9" fill="#a3245a"/><rect x="54.9" y="12.9" width="4.1" height="1.9" fill="#96915a"/><rect x="59.0" y="12.9" width="10.2" height="1.9" fill="#6b9426"/><rect x="70.2" y="12.9" width="5.1" height="1.9" fill="#96915a"/><rect x="75.9" y="12.9" width="0.8" height="1.9" fill="#a3245a"/><rect x="77.9" y="12.9" width="3.5" height="1.9" fill="#96915a"/><rect x="81.4" y="12.9" width="10.2" height="1.9" fill="#6b9426"/><rect x="91.5" y="12.9" width="2.0" height="1.9" fill="#94948e"/><rect x="93.6" y="12.9" width="3.7" height="1.9" fill="#96915a"/><rect x="97.6" y="12.9" width="1.6" height="1.9" fill="#a3245a"/><rect x="101.3" y="12.9" width="4.5" height="1.9" fill="#96915a"/><rect x="105.8" y="12.9" width="3.3" height="1.9" fill="#6b9426"/><rect x="11.0" y="15.9" width="6.1" height="1.9" fill="#96915a"/><rect x="18.1" y="15.9" width="0.8" height="1.9" fill="#a3245a"/><rect x="20.9" y="15.9" width="3.9" height="1.9" fill="#96915a"/><rect x="11.0" y="18.9" width="0.8" height="1.9" fill="#94948e"/><rect x="11.0" y="24.9" width="5.9" height="1.9" fill="#3e8c9c"/><rect x="18.1" y="24.9" width="10.8" height="1.9" fill="#6b9426"/><rect x="30.1" y="24.9" width="0.8" height="1.9" fill="#a3245a"/><rect x="32.9" y="24.9" width="4.1" height="1.9" fill="#bd7a22"/><rect x="39.0" y="24.9" width="1.6" height="1.9" fill="#3e8c9c"/><rect x="41.1" y="24.9" width="0.8" height="1.9" fill="#94948e"/><rect x="16.1" y="27.9" width="5.9" height="1.9" fill="#a3245a"/><rect x="23.0" y="27.9" width="7.9" height="1.9" fill="#94948e"/><rect x="20.9" y="30.9" width="4.1" height="1.9" fill="#a3245a"/><rect x="27.0" y="30.9" width="7.9" height="1.9" fill="#96915a"/><rect x="25.0" y="33.9" width="7.9" height="1.9" fill="#a3245a"/><rect x="34.0" y="33.9" width="7.9" height="1.9" fill="#3e8c9c"/><rect x="41.9" y="33.9" width="37.0" height="1.9" fill="#96915a"/><rect x="25.0" y="36.9" width="5.9" height="1.9" fill="#a3245a"/><rect x="30.9" y="36.9" width="2.0" height="1.9" fill="#94948e"/><rect x="20.9" y="39.9" width="4.1" height="1.9" fill="#a3245a"/><rect x="27.0" y="39.9" width="5.9" height="1.9" fill="#96915a"/><rect x="25.0" y="42.9" width="7.9" height="1.9" fill="#a3245a"/><rect x="34.0" y="42.9" width="7.9" height="1.9" fill="#3e8c9c"/><rect x="41.9" y="42.9" width="41.1" height="1.9" fill="#96915a"/><rect x="25.0" y="45.9" width="5.9" height="1.9" fill="#a3245a"/><rect x="30.9" y="45.9" width="2.0" height="1.9" fill="#94948e"/><rect x="20.9" y="48.9" width="4.1" height="1.9" fill="#a3245a"/><rect x="27.0" y="48.9" width="7.9" height="1.9" fill="#96915a"/><rect x="25.0" y="51.9" width="7.9" height="1.9" fill="#a3245a"/><rect x="34.0" y="51.9" width="7.9" height="1.9" fill="#3e8c9c"/><rect x="41.9" y="51.9" width="43.1" height="1.9" fill="#96915a"/><rect x="25.0" y="54.9" width="5.9" height="1.9" fill="#a3245a"/><rect x="30.9" y="54.9" width="2.0" height="1.9" fill="#94948e"/><rect x="16.1" y="57.9" width="0.8" height="1.9" fill="#94948e"/><rect x="11.0" y="60.9" width="0.8" height="1.9" fill="#94948e"/><rect x="11.0" y="66.9" width="5.9" height="1.9" fill="#3e8c9c"/><rect x="18.1" y="66.9" width="14.8" height="1.9" fill="#6b9426"/><rect x="34.0" y="66.9" width="0.8" height="1.9" fill="#a3245a"/><rect x="36.0" y="66.9" width="6.9" height="1.9" fill="#bd7a22"/><rect x="44.9" y="66.9" width="1.8" height="1.9" fill="#3e8c9c"/><rect x="48.0" y="66.9" width="0.8" height="1.9" fill="#94948e"/><rect x="16.1" y="69.9" width="6.9" height="1.9" fill="#94948e"/><rect x="24.0" y="69.9" width="0.8" height="1.9" fill="#a3245a"/><rect x="27.0" y="69.9" width="15.9" height="1.9" fill="#94948e"/><rect x="16.1" y="72.9" width="1.0" height="1.9" fill="#a3245a"/><rect x="17.1" y="72.9" width="10.0" height="1.9" fill="#94948e"/><rect x="28.1" y="72.9" width="0.8" height="1.9" fill="#a3245a"/><rect x="30.1" y="72.9" width="8.9" height="1.9" fill="#7659a8"/><rect x="39.0" y="72.9" width="1.8" height="1.9" fill="#94948e"/><rect x="20.9" y="75.9" width="6.9" height="1.9" fill="#a3245a"/><rect x="28.9" y="75.9" width="17.1" height="1.9" fill="#94948e"/><rect x="47.0" y="75.9" width="0.8" height="1.9" fill="#a3245a"/><rect x="49.0" y="75.9" width="8.9" height="1.9" fill="#7659a8"/><rect x="58.0" y="75.9" width="2.0" height="1.9" fill="#94948e"/><rect x="60.0" y="75.9" width="9.2" height="1.9" fill="#6b9426"/><rect x="69.1" y="75.9" width="2.0" height="1.9" fill="#7659a8"/><rect x="71.2" y="75.9" width="1.6" height="1.9" fill="#94948e"/><rect x="74.8" y="75.9" width="0.8" height="1.9" fill="#a3245a"/><rect x="76.9" y="75.9" width="4.1" height="1.9" fill="#96915a"/><rect x="16.1" y="78.9" width="1.0" height="1.9" fill="#96915a"/><rect x="17.1" y="78.9" width="4.9" height="1.9" fill="#a3245a"/><rect x="23.0" y="78.9" width="1.6" height="1.9" fill="#a3245a"/><rect x="24.6" y="78.9" width="9.4" height="1.9" fill="#94948e"/><rect x="35.0" y="78.9" width="0.8" height="1.9" fill="#a3245a"/><rect x="37.0" y="78.9" width="4.9" height="1.9" fill="#7659a8"/><rect x="41.9" y="78.9" width="2.8" height="1.9" fill="#94948e"/><rect x="20.9" y="81.9" width="6.9" height="1.9" fill="#a3245a"/><rect x="28.9" y="81.9" width="17.1" height="1.9" fill="#94948e"/><rect x="47.0" y="81.9" width="0.8" height="1.9" fill="#a3245a"/><rect x="49.0" y="81.9" width="4.9" height="1.9" fill="#7659a8"/><rect x="53.9" y="81.9" width="3.1" height="1.9" fill="#94948e"/><rect x="56.9" y="81.9" width="8.1" height="1.9" fill="#6b9426"/><rect x="65.1" y="81.9" width="1.6" height="1.9" fill="#7659a8"/><rect x="66.7" y="81.9" width="3.3" height="1.9" fill="#94948e"/><rect x="71.0" y="81.9" width="0.8" height="1.9" fill="#a3245a"/><rect x="72.8" y="81.9" width="4.1" height="1.9" fill="#96915a"/><rect x="16.1" y="84.9" width="1.0" height="1.9" fill="#96915a"/><rect x="17.1" y="84.9" width="4.9" height="1.9" fill="#a3245a"/><rect x="22.0" y="84.9" width="1.0" height="1.9" fill="#94948e"/><rect x="20.9" y="87.9" width="6.9" height="1.9" fill="#a3245a"/><rect x="28.9" y="87.9" width="17.1" height="1.9" fill="#94948e"/><rect x="46.0" y="87.9" width="7.9" height="1.9" fill="#6b9426"/><rect x="53.9" y="87.9" width="2.0" height="1.9" fill="#7659a8"/><rect x="55.9" y="87.9" width="3.1" height="1.9" fill="#94948e"/><rect x="16.1" y="90.9" width="0.8" height="1.9" fill="#94948e"/><rect x="11.0" y="93.9" width="0.8" height="1.9" fill="#94948e"/><rect x="11.0" y="99.9" width="5.9" height="1.9" fill="#3e8c9c"/><rect x="18.1" y="99.9" width="12.8" height="1.9" fill="#6b9426"/><rect x="32.9" y="99.9" width="0.8" height="1.9" fill="#a3245a"/><rect x="35.0" y="99.9" width="3.9" height="1.9" fill="#bd7a22"/><rect x="39.9" y="99.9" width="2.0" height="1.9" fill="#3e8c9c"/><rect x="42.9" y="99.9" width="1.8" height="1.9" fill="#94948e"/><rect x="16.1" y="120.9" width="22.8" height="1.9" fill="#4d4d45"/><rect x="16.1" y="138.9" width="5.9" height="1.9" fill="#3e8c9c"/><rect x="23.0" y="138.9" width="7.9" height="1.9" fill="#94948e"/><rect x="32.9" y="138.9" width="0.8" height="1.9" fill="#a3245a"/><rect x="35.0" y="138.9" width="29.9" height="1.9" fill="#96915a"/><rect x="16.1" y="141.9" width="1.0" height="1.9" fill="#a3245a"/><rect x="17.1" y="141.9" width="11.8" height="1.9" fill="#96915a"/><rect x="28.9" y="141.9" width="1.0" height="1.9" fill="#a3245a"/><rect x="29.9" y="141.9" width="13.0" height="1.9" fill="#96915a"/><rect x="42.9" y="141.9" width="2.0" height="1.9" fill="#a3245a"/><rect x="44.9" y="141.9" width="3.1" height="1.9" fill="#96915a"/><rect x="49.0" y="141.9" width="5.9" height="1.9" fill="#96915a"/><rect x="54.9" y="141.9" width="1.2" height="1.9" fill="#a3245a"/><rect x="56.9" y="141.9" width="17.9" height="1.9" fill="#96915a"/><rect x="75.9" y="141.9" width="1.4" height="1.9" fill="#a3245a"/><rect x="78.3" y="141.9" width="3.1" height="1.9" fill="#94948e"/><rect x="81.4" y="141.9" width="3.7" height="1.9" fill="#6b9426"/><rect x="85.0" y="141.9" width="8.9" height="1.9" fill="#94948e"/><rect x="20.9" y="144.9" width="6.9" height="1.9" fill="#a3245a"/><rect x="28.9" y="144.9" width="4.1" height="1.9" fill="#94948e"/><rect x="16.1" y="147.9" width="1.0" height="1.9" fill="#96915a"/><rect x="17.1" y="147.9" width="4.9" height="1.9" fill="#a3245a"/><rect x="23.0" y="147.9" width="1.6" height="1.9" fill="#a3245a"/><rect x="24.6" y="147.9" width="8.3" height="1.9" fill="#94948e"/><rect x="20.9" y="150.9" width="6.9" height="1.9" fill="#a3245a"/><rect x="28.9" y="150.9" width="8.1" height="1.9" fill="#94948e"/><rect x="39.0" y="150.9" width="0.8" height="1.9" fill="#a3245a"/><rect x="40.9" y="150.9" width="4.1" height="1.9" fill="#94948e"/><rect x="16.1" y="153.9" width="1.0" height="1.9" fill="#96915a"/><rect x="17.1" y="153.9" width="4.9" height="1.9" fill="#a3245a"/><rect x="23.0" y="153.9" width="6.9" height="1.9" fill="#a3245a"/><rect x="30.9" y="153.9" width="3.1" height="1.9" fill="#96915a"/><rect x="11.0" y="156.9" width="0.8" height="1.9" fill="#94948e"/><rect x="11.0" y="162.9" width="16.9" height="1.9" fill="#4d4d45"/><rect x="11.0" y="165.9" width="5.9" height="1.9" fill="#3e8c9c"/><rect x="18.1" y="165.9" width="14.8" height="1.9" fill="#6b9426"/><rect x="34.0" y="165.9" width="0.8" height="1.9" fill="#a3245a"/><rect x="36.0" y="165.9" width="0.8" height="1.9" fill="#96915a"/><rect x="36.8" y="165.9" width="8.1" height="1.9" fill="#bd7a22"/><rect x="44.9" y="165.9" width="1.0" height="1.9" fill="#94948e"/><rect x="46.0" y="165.9" width="6.9" height="1.9" fill="#bd7a22"/><rect x="53.9" y="165.9" width="1.0" height="1.9" fill="#a3245a"/><rect x="56.9" y="165.9" width="1.0" height="1.9" fill="#7659a8"/><rect x="58.0" y="165.9" width="1.0" height="1.9" fill="#96915a"/><rect x="60.0" y="165.9" width="3.1" height="1.9" fill="#3e8c9c"/><rect x="63.0" y="165.9" width="1.0" height="1.9" fill="#96915a"/><rect x="16.1" y="168.9" width="6.9" height="1.9" fill="#94948e"/><rect x="24.0" y="168.9" width="0.8" height="1.9" fill="#a3245a"/><rect x="27.0" y="168.9" width="15.9" height="1.9" fill="#94948e"/><rect x="16.1" y="171.9" width="2.0" height="1.9" fill="#a3245a"/><rect x="18.1" y="171.9" width="8.9" height="1.9" fill="#94948e"/><rect x="28.1" y="171.9" width="2.8" height="1.9" fill="#a3245a"/><rect x="32.9" y="171.9" width="1.0" height="1.9" fill="#7659a8"/><rect x="34.0" y="171.9" width="1.0" height="1.9" fill="#96915a"/><rect x="36.0" y="171.9" width="6.9" height="1.9" fill="#a3245a"/><rect x="44.9" y="171.9" width="7.9" height="1.9" fill="#94948e"/><rect x="52.9" y="171.9" width="10.2" height="1.9" fill="#3e8c9c"/><rect x="63.0" y="171.9" width="9.8" height="1.9" fill="#94948e"/><rect x="16.1" y="174.9" width="6.9" height="1.9" fill="#a3245a"/><rect x="24.0" y="174.9" width="8.9" height="1.9" fill="#94948e"/><rect x="32.9" y="174.9" width="7.9" height="1.9" fill="#6b9426"/><rect x="40.9" y="174.9" width="10.0" height="1.9" fill="#94948e"/><rect x="11.0" y="177.9" width="0.8" height="1.9" fill="#94948e"/><rect x="11.0" y="183.9" width="6.9" height="1.9" fill="#a3245a"/><rect x="18.9" y="183.9" width="2.0" height="1.9" fill="#94948e"/><rect x="16.1" y="186.9" width="13.8" height="1.9" fill="#94948e"/><rect x="16.1" y="189.9" width="11.8" height="1.9" fill="#94948e"/><rect x="16.1" y="192.9" width="14.8" height="1.9" fill="#94948e"/><rect x="16.1" y="195.9" width="13.8" height="1.9" fill="#94948e"/><rect x="16.1" y="198.9" width="13.8" height="1.9" fill="#94948e"/><rect x="11.0" y="201.9" width="0.8" height="1.9" fill="#94948e"/><rect x="16.1" y="102.9" width="2.0" height="1.9" fill="#4d4d45"/><rect x="19.1" y="102.9" width="5.9" height="1.9" fill="#4d4d45"/><rect x="27.0" y="102.9" width="7.9" height="1.9" fill="#4d4d45"/><rect x="36.0" y="102.9" width="0.8" height="1.9" fill="#4d4d45"/><rect x="38.8" y="102.9" width="28.1" height="1.9" fill="#4d4d45"/><rect x="16.1" y="105.9" width="2.0" height="1.9" fill="#4d4d45"/><rect x="19.1" y="105.9" width="5.9" height="1.9" fill="#4d4d45"/><rect x="27.0" y="105.9" width="7.9" height="1.9" fill="#4d4d45"/><rect x="36.0" y="105.9" width="0.8" height="1.9" fill="#4d4d45"/><rect x="38.8" y="105.9" width="36.0" height="1.9" fill="#4d4d45"/><rect x="16.1" y="108.9" width="2.0" height="1.9" fill="#4d4d45"/><rect x="19.1" y="108.9" width="5.9" height="1.9" fill="#4d4d45"/><rect x="27.0" y="108.9" width="7.9" height="1.9" fill="#4d4d45"/><rect x="36.0" y="108.9" width="0.8" height="1.9" fill="#4d4d45"/><rect x="38.8" y="108.9" width="28.1" height="1.9" fill="#4d4d45"/><rect x="16.1" y="111.9" width="2.0" height="1.9" fill="#4d4d45"/><rect x="19.1" y="111.9" width="5.9" height="1.9" fill="#4d4d45"/><rect x="27.0" y="111.9" width="7.9" height="1.9" fill="#4d4d45"/><rect x="36.0" y="111.9" width="0.8" height="1.9" fill="#4d4d45"/><rect x="38.8" y="111.9" width="25.0" height="1.9" fill="#4d4d45"/><rect x="16.1" y="114.9" width="2.0" height="1.9" fill="#4d4d45"/><rect x="19.1" y="114.9" width="5.9" height="1.9" fill="#4d4d45"/><rect x="27.0" y="114.9" width="7.9" height="1.9" fill="#4d4d45"/><rect x="36.0" y="114.9" width="0.8" height="1.9" fill="#4d4d45"/><rect x="38.8" y="114.9" width="28.1" height="1.9" fill="#4d4d45"/><rect x="16.1" y="117.9" width="2.0" height="1.9" fill="#4d4d45"/><rect x="19.1" y="117.9" width="5.9" height="1.9" fill="#4d4d45"/><rect x="27.0" y="117.9" width="7.9" height="1.9" fill="#4d4d45"/><rect x="36.0" y="117.9" width="0.8" height="1.9" fill="#4d4d45"/><rect x="38.8" y="117.9" width="31.1" height="1.9" fill="#4d4d45"/><rect x="16.1" y="123.9" width="2.0" height="1.9" fill="#4d4d45"/><rect x="19.1" y="123.9" width="5.9" height="1.9" fill="#4d4d45"/><rect x="27.0" y="123.9" width="7.9" height="1.9" fill="#4d4d45"/><rect x="36.0" y="123.9" width="0.8" height="1.9" fill="#4d4d45"/><rect x="38.8" y="123.9" width="36.0" height="1.9" fill="#4d4d45"/><rect x="16.1" y="126.9" width="2.0" height="1.9" fill="#4d4d45"/><rect x="19.1" y="126.9" width="5.9" height="1.9" fill="#4d4d45"/><rect x="27.0" y="126.9" width="7.9" height="1.9" fill="#4d4d45"/><rect x="36.0" y="126.9" width="0.8" height="1.9" fill="#4d4d45"/><rect x="38.8" y="126.9" width="28.1" height="1.9" fill="#4d4d45"/><rect x="16.1" y="129.9" width="2.0" height="1.9" fill="#4d4d45"/><rect x="19.1" y="129.9" width="5.9" height="1.9" fill="#4d4d45"/><rect x="27.0" y="129.9" width="7.9" height="1.9" fill="#4d4d45"/><rect x="36.0" y="129.9" width="0.8" height="1.9" fill="#4d4d45"/><rect x="38.8" y="129.9" width="26.0" height="1.9" fill="#4d4d45"/><rect x="16.1" y="132.9" width="2.0" height="1.9" fill="#4d4d45"/><rect x="19.1" y="132.9" width="5.9" height="1.9" fill="#4d4d45"/><rect x="27.0" y="132.9" width="7.9" height="1.9" fill="#4d4d45"/><rect x="36.0" y="132.9" width="0.8" height="1.9" fill="#4d4d45"/><rect x="38.8" y="132.9" width="32.1" height="1.9" fill="#4d4d45"/><rect x="16.1" y="135.9" width="2.0" height="1.9" fill="#4d4d45"/><rect x="19.1" y="135.9" width="5.9" height="1.9" fill="#4d4d45"/><rect x="27.0" y="135.9" width="7.9" height="1.9" fill="#4d4d45"/><rect x="36.0" y="135.9" width="0.8" height="1.9" fill="#4d4d45"/><rect x="38.8" y="135.9" width="31.1" height="1.9" fill="#4d4d45"/></svg>
<div class="abs" style="left:950px;top:219px;width:100px;height:3px;background:rgba(255,255,255,0.08);"></div>
<div class="abs" style="left:1058px;top:89px;width:1px;height:718px;background:#1b1c17;"></div>
<div class="abs" style="left:1050px;top:260px;width:8px;height:266px;background:#818181;"></div>
<div class="abs" style="left:1059px;top:60px;width:392px;height:29px;background:#1c1d19;"></div>
<div class="abs" style="left:1059px;top:60px;width:110px;height:29px;background:#272822;"></div>
<div class="t" style="left:1070px;top:67.5px;font-size:13px;color:#d6d6d0;"><span style="letter-spacing:-0.4px">Web</span><span class="cj" style="width:39px;">浏览器</span></div>
<svg style="left:1146px;top:70px" width="9" height="9" viewBox="0 0 9 9" fill="none" stroke="#d6d6d0" stroke-width="1"><path d="M0.5 0.5l8 8M8.5 0.5l-8 8"/></svg>
<div class="abs" style="left:1065px;top:95px;width:379px;height:27px;border:1px solid #63635d"></div>
<div class="t" style="left:1074px;top:102px;font-size:13.5px;color:#e2e2dc;letter-spacing:0.05px">http://localhost:8080/#/pages/market/market</div>
<div class="abs" style="left:1065px;top:127px;width:120px;height:26px;border:1px solid #1c1c44"></div>
<div class="t" style="left:1071px;top:134px;font-size:13px;color:#d6d6d0;letter-spacing:-0.1px">iPhone X</div>
<svg style="left:1173px;top:138px" width="7" height="4" viewBox="0 0 7 4"><path d="M0 0h7L3.500 4z" fill="#d6d6d0"/></svg>
<svg style="left:1197.500px;top:134.300px" width="13" height="12" viewBox="0 0 13 12" fill="none" stroke="#e0e0da" stroke-width="1.2" stroke-linejoin="round" stroke-linecap="round"><path d="M4.600 0.600H12.400V11.400H0.600V4.600"/><path d="M0.600 0.600l6 6M0.600 3.800V0.600h3.200"/></svg>
<svg style="left:1226.800px;top:133.500px" width="13.500" height="13" viewBox="0 0 13.500 13" fill="none" stroke="#e0e0da" stroke-width="1.2" stroke-linejoin="round" stroke-linecap="round" stroke-width="1.200"><path d="M6.75 12.75 L7.39 12.57 L7.94 12.11 L8.38 11.51 L8.74 10.97 L9.12 10.61 L9.63 10.46 L10.28 10.42 L11.01 10.34 L11.69 10.09 L12.16 9.62 L12.33 8.98 L12.20 8.27 L11.90 7.60 L11.62 7.01 L11.50 6.50 L11.62 5.99 L11.90 5.40 L12.20 4.73 L12.33 4.02 L12.16 3.38 L11.69 2.91 L11.01 2.66 L10.28 2.58 L9.63 2.54 L9.12 2.39 L8.74 2.03 L8.38 1.49 L7.94 0.89 L7.39 0.43 L6.75 0.25 L6.11 0.43 L5.56 0.89 L5.12 1.49 L4.76 2.03 L4.38 2.39 L3.87 2.54 L3.22 2.58 L2.49 2.66 L1.81 2.91 L1.34 3.37 L1.17 4.02 L1.30 4.73 L1.60 5.40 L1.88 5.99 L2.00 6.50 L1.88 7.01 L1.60 7.60 L1.30 8.27 L1.17 8.98 L1.34 9.62 L1.81 10.09 L2.49 10.34 L3.22 10.42 L3.87 10.46 L4.38 10.61 L4.76 10.97 L5.12 11.51 L5.56 12.11 L6.11 12.57z"/><circle cx="6.750" cy="6.500" r="2"/></svg>
<svg style="left:1257px;top:134px" width="14" height="12" viewBox="0 0 14 12" fill="none" stroke="#e0e0da" stroke-width="1.2" stroke-linejoin="round" stroke-linecap="round"><rect x="0.600" y="0.600" width="12.800" height="10.800" rx="0.300"/><path d="M3.300 3.600l2.400 2.200-2.400 2.200M7.400 8.400h2.800" stroke-width="1"/></svg>
<svg style="left:1287px;top:135px" width="13" height="10" viewBox="0 0 13 10" fill="none" stroke="#c2c2be" stroke-width="1.700" stroke-linejoin="round" stroke-linecap="round"><path d="M12 5H1.300M5.200 1L1 5l4.200 4"/></svg>
<svg style="left:1317px;top:135px" width="13" height="10" viewBox="0 0 13 10" fill="none" stroke="#c2c2be" stroke-width="1.700" stroke-linejoin="round" stroke-linecap="round"><path d="M1 5h10.700M7.800 1L12 5 7.800 9"/></svg>
<svg style="left:1347.500px;top:134px" width="13.500" height="12.500" viewBox="0 0 13.500 12.500" fill="none" stroke="#d6d6d0" stroke-width="1.300" stroke-linecap="round"><path d="M11.600 8.200A5.400 5.400 0 1 1 9.800 2.200"/><path d="M8 2.600l4.300 0.700L11.800 -0.800z" fill="#d6d6d0" stroke="none" transform="translate(0.300 0.800)"/></svg>
<svg style="left:1378.500px;top:134px" width="10" height="12.500" viewBox="0 0 10 12.500" fill="none" stroke="#e0e0da" stroke-width="1.2" stroke-linejoin="round" stroke-linecap="round" stroke-width="1.300"><rect x="0.700" y="5.700" width="8.600" height="6.100" rx="0.300"/><path d="M2.600 5.700V3.400a2.400 2.400 0 0 1 4.700-0.800"/></svg>
<svg style="left:1408px;top:134.200px" width="11.500" height="11" viewBox="0 0 12 12" fill="none" stroke="#e0e0da" stroke-width="1.2" stroke-linejoin="round" stroke-linecap="round" stroke-width="1.200"><rect x="0.600" y="0.600" width="4" height="4"/><rect x="7.400" y="0.600" width="4" height="4"/><rect x="0.600" y="7.400" width="4" height="4"/><path d="M7.400 7.400h1.600v1.600H7.400zM10.600 7.400h1M11.400 9.800v1.600h-1.600M7.400 11.400h0.800"/></svg>
<div class="abs" style="left:1059px;top:160px;width:392px;height:1px;background:#1a1b17;"></div>
<div class="abs" style="left:1067px;top:177px;width:375px;height:813px;background:#fff;overflow:hidden;font-family:'Liberation Sans',sans-serif">
<div class="abs" style="left:15px;top:16px;width:310px;height:35px;background:#edf0f5;border-radius:4px"></div>
<div class="abs" style="left:170px;top:19px;width:152px;height:29px;background:#fff;border-radius:4px"></div>
<div class="t" style="left:94px;top:34px;font-size:14px;color:#6b6f76;transform:translate(-50%,-50%);transform-origin:center center;"><span class="cj" style="width:28px;">自选</span></div>
<div class="t" style="left:246px;top:33px;font-size:15px;color:#15171a;transform:translate(-50%,-50%) scaleX(0.86);transform-origin:center center;-webkit-text-stroke:0.35px #15171a">USDT</div>
<svg style="left:341px;top:24.500px" width="18" height="18" viewBox="0 0 18 18" fill="none" stroke="#74787e" stroke-width="1.700" stroke-linecap="round"><circle cx="7.800" cy="7.800" r="6.600"/><path d="M12.800 12.800l3.800 3.800"/></svg>
<div class="t" style="left:15px;top:70.69999999999999px;font-size:14px;color:#6e7279;transform:translate(0,-50%);transform-origin:left center;font-weight:bold"><span class="cj" style="width:42px;">交易对</span></div>
<div class="t" style="left:188px;top:70.69999999999999px;font-size:14px;color:#6e7279;transform:translate(-50%,-50%);transform-origin:center center;font-weight:bold"><span class="cj" style="width:42px;">最新价</span></div>
<div class="t" style="left:350px;top:70.69999999999999px;font-size:14px;color:#6e7279;transform:translate(-100%,-50%);transform-origin:right center;font-weight:bold"><span class="cj" style="width:70px;">今日涨跌幅</span></div>
<div class="t" style="left:15px;top:112.5px;font-size:16.5px;color:#222;transform:translate(0,-50%) scaleX(0.88);transform-origin:left center;"><span style="font-size:16.500px;color:#1c1e22;-webkit-text-stroke:0.3px #1c1e22">PI</span><span style="font-size:12.500px;color:#9b9ea4;letter-spacing:0.5px">/USDT</span></div>
<div class="t" style="left:15px;top:130.5px;font-size:11.5px;color:#a9acb1;transform:translate(0,-50%);transform-origin:left center;letter-spacing:-0.1px">24H: 1428.81976</div>
<div class="t" style="left:193px;top:113.0px;font-size:16px;color:#25b794;transform:translate(-50%,-50%);transform-origin:center center;font-weight:bold;letter-spacing:-0.45px">34.14302</div>
<div class="t" style="left:193px;top:130.5px;font-size:11.5px;color:#3a3d42;transform:translate(-50%,-50%);transform-origin:center center;letter-spacing:-0.15px">2826.66990 INR</div>
<div class="abs" style="left:285px;top:105.0px;width:75px;height:30px;background:#25b794;border-radius:4px"></div>
<div class="t" style="left:322.5px;top:120.5px;font-size:14.5px;color:#fff;transform:translate(-50%,-50%);transform-origin:center center;font-weight:bold;letter-spacing:-0.4px">+5.89%</div>
<div class="t" style="left:15px;top:180.5px;font-size:16.5px;color:#222;transform:translate(0,-50%) scaleX(0.88);transform-origin:left center;"><span style="font-size:16.500px;color:#1c1e22;-webkit-text-stroke:0.3px #1c1e22">XAUT</span><span style="font-size:12.500px;color:#9b9ea4;letter-spacing:0.5px">/USDT</span></div>
<div class="t" style="left:15px;top:198.5px;font-size:11.5px;color:#a9acb1;transform:translate(0,-50%);transform-origin:left center;letter-spacing:-0.1px">24H: 3756.47856</div>
<div class="t" style="left:193px;top:181.0px;font-size:16px;color:#25b794;transform:translate(-50%,-50%);transform-origin:center center;font-weight:bold;letter-spacing:-0.45px">3252.01000</div>
<div class="t" style="left:193px;top:198.5px;font-size:11.5px;color:#3a3d42;transform:translate(-50%,-50%);transform-origin:center center;letter-spacing:-0.15px">269230.98109 INR</div>
<div class="abs" style="left:285px;top:173.0px;width:75px;height:30px;background:#25b794;border-radius:4px"></div>
<div class="t" style="left:322.5px;top:188.5px;font-size:14.5px;color:#fff;transform:translate(-50%,-50%);transform-origin:center center;font-weight:bold;letter-spacing:-0.4px">+0.16%</div>
<div class="t" style="left:15px;top:248.5px;font-size:16.5px;color:#222;transform:translate(0,-50%) scaleX(0.88);transform-origin:left center;"><span style="font-size:16.500px;color:#1c1e22;-webkit-text-stroke:0.3px #1c1e22">ICX</span><span style="font-size:12.500px;color:#9b9ea4;letter-spacing:0.5px">/USDT</span></div>
<div class="t" style="left:15px;top:266.5px;font-size:11.5px;color:#a9acb1;transform:translate(0,-50%);transform-origin:left center;letter-spacing:-0.1px">24H: 4642588.53985</div>
<div class="t" style="left:193px;top:249.0px;font-size:16px;color:#25b794;transform:translate(-50%,-50%);transform-origin:center center;font-weight:bold;letter-spacing:-0.45px">0.11160</div>
<div class="t" style="left:193px;top:266.5px;font-size:11.5px;color:#3a3d42;transform:translate(-50%,-50%);transform-origin:center center;letter-spacing:-0.15px">9.23926 INR</div>
<div class="abs" style="left:285px;top:241.0px;width:75px;height:30px;background:#25b794;border-radius:4px"></div>
<div class="t" style="left:322.5px;top:256.5px;font-size:14.5px;color:#fff;transform:translate(-50%,-50%);transform-origin:center center;font-weight:bold;letter-spacing:-0.4px">+2.29%</div>
<div class="t" style="left:15px;top:316.5px;font-size:16.5px;color:#222;transform:translate(0,-50%) scaleX(0.88);transform-origin:left center;"><span style="font-size:16.500px;color:#1c1e22;-webkit-text-stroke:0.3px #1c1e22">AXS</span><span style="font-size:12.500px;color:#9b9ea4;letter-spacing:0.5px">/USDT</span></div>
<div class="t" style="left:15px;top:334.5px;font-size:11.5px;color:#a9acb1;transform:translate(0,-50%);transform-origin:left center;letter-spacing:-0.1px">24H: 1930002.61068</div>
<div class="t" style="left:193px;top:317.0px;font-size:16px;color:#25b794;transform:translate(-50%,-50%);transform-origin:center center;font-weight:bold;letter-spacing:-0.45px">3.18220</div>
<div class="t" style="left:193px;top:334.5px;font-size:11.5px;color:#3a3d42;transform:translate(-50%,-50%);transform-origin:center center;letter-spacing:-0.15px">263.45147 INR</div>
<div class="abs" style="left:285px;top:309.0px;width:75px;height:30px;background:#25b794;border-radius:4px"></div>
<div class="t" style="left:322.5px;top:324.5px;font-size:14.5px;color:#fff;transform:translate(-50%,-50%);transform-origin:center center;font-weight:bold;letter-spacing:-0.4px">+2.90%</div>
<div class="t" style="left:15px;top:384.5px;font-size:16.5px;color:#222;transform:translate(0,-50%) scaleX(0.88);transform-origin:left center;"><span style="font-size:16.500px;color:#1c1e22;-webkit-text-stroke:0.3px #1c1e22">BSV</span><span style="font-size:12.500px;color:#9b9ea4;letter-spacing:0.5px">/USDT</span></div>
<div class="t" style="left:15px;top:402.5px;font-size:11.5px;color:#a9acb1;transform:translate(0,-50%);transform-origin:left center;letter-spacing:-0.1px">24H: 305865.67145</div>
<div class="t" style="left:193px;top:385.0px;font-size:16px;color:#ee4a5d;transform:translate(-50%,-50%);transform-origin:center center;font-weight:bold;letter-spacing:-0.45px">39.87460</div>
<div class="t" style="left:193px;top:402.5px;font-size:11.5px;color:#3a3d42;transform:translate(-50%,-50%);transform-origin:center center;letter-spacing:-0.15px">3301.18225 INR</div>
<div class="abs" style="left:285px;top:377.0px;width:75px;height:30px;background:#ee4a5d;border-radius:4px"></div>
<div class="t" style="left:322.5px;top:392.5px;font-size:14.5px;color:#fff;transform:translate(-50%,-50%);transform-origin:center center;font-weight:bold;letter-spacing:-0.4px">-0.15%</div>
<div class="t" style="left:15px;top:452.5px;font-size:16.5px;color:#222;transform:translate(0,-50%) scaleX(0.88);transform-origin:left center;"><span style="font-size:16.500px;color:#1c1e22;-webkit-text-stroke:0.3px #1c1e22">ONT</span><span style="font-size:12.500px;color:#9b9ea4;letter-spacing:0.5px">/USDT</span></div>
<div class="t" style="left:15px;top:470.5px;font-size:11.5px;color:#a9acb1;transform:translate(0,-50%);transform-origin:left center;letter-spacing:-0.1px">24H: 13804806.32956</div>
<div class="t" style="left:193px;top:453.0px;font-size:16px;color:#ee4a5d;transform:translate(-50%,-50%);transform-origin:center center;font-weight:bold;letter-spacing:-0.45px">0.16830</div>
<div class="t" style="left:193px;top:470.5px;font-size:11.5px;color:#3a3d42;transform:translate(-50%,-50%);transform-origin:center center;letter-spacing:-0.15px">13.93341 INR</div>
<div class="abs" style="left:285px;top:445.0px;width:75px;height:30px;background:#ee4a5d;border-radius:4px"></div>
<div class="t" style="left:322.5px;top:460.5px;font-size:14.5px;color:#fff;transform:translate(-50%,-50%);transform-origin:center center;font-weight:bold;letter-spacing:-0.4px">-1.58%</div>
<div class="t" style="left:15px;top:520.5px;font-size:16.5px;color:#222;transform:translate(0,-50%) scaleX(0.88);transform-origin:left center;"><span style="font-size:16.500px;color:#1c1e22;-webkit-text-stroke:0.3px #1c1e22">XTZ</span><span style="font-size:12.500px;color:#9b9ea4;letter-spacing:0.5px">/USDT</span></div>
<div class="t" style="left:15px;top:538.5px;font-size:11.5px;color:#a9acb1;transform:translate(0,-50%);transform-origin:left center;letter-spacing:-0.1px">24H: 7047706.52884</div>
<div class="t" style="left:193px;top:521.0px;font-size:16px;color:#25b794;transform:translate(-50%,-50%);transform-origin:center center;font-weight:bold;letter-spacing:-0.45px">0.67610</div>
<div class="t" style="left:193px;top:538.5px;font-size:11.5px;color:#3a3d42;transform:translate(-50%,-50%);transform-origin:center center;letter-spacing:-0.15px">55.97371 INR</div>
<div class="abs" style="left:285px;top:513.0px;width:75px;height:30px;background:#25b794;border-radius:4px"></div>
<div class="t" style="left:322.5px;top:528.5px;font-size:14.5px;color:#fff;transform:translate(-50%,-50%);transform-origin:center center;font-weight:bold;letter-spacing:-0.4px">+0.55%</div>
<div class="t" style="left:15px;top:588.5px;font-size:16.5px;color:#222;transform:translate(0,-50%) scaleX(0.88);transform-origin:left center;"><span style="font-size:16.500px;color:#1c1e22;-webkit-text-stroke:0.3px #1c1e22">XLM</span><span style="font-size:12.500px;color:#9b9ea4;letter-spacing:0.5px">/USDT</span></div>
<div class="t" style="left:15px;top:606.5px;font-size:11.5px;color:#a9acb1;transform:translate(0,-50%);transform-origin:left center;letter-spacing:-0.1px">24H: 38623486.38457</div>
<div class="t" style="left:193px;top:589.0px;font-size:16px;color:#ee4a5d;transform:translate(-50%,-50%);transform-origin:center center;font-weight:bold;letter-spacing:-0.45px">0.30755</div>
<div class="t" style="left:193px;top:606.5px;font-size:11.5px;color:#3a3d42;transform:translate(-50%,-50%);transform-origin:center center;letter-spacing:-0.15px">25.46179 INR</div>
<div class="abs" style="left:285px;top:581.0px;width:75px;height:30px;background:#ee4a5d;border-radius:4px"></div>
<div class="t" style="left:322.5px;top:596.5px;font-size:14.5px;color:#fff;transform:translate(-50%,-50%);transform-origin:center center;font-weight:bold;letter-spacing:-0.4px">-4.70%</div>
<div class="t" style="left:15px;top:656.5px;font-size:16.5px;color:#222;transform:translate(0,-50%) scaleX(0.88);transform-origin:left center;"><span style="font-size:16.500px;color:#1c1e22;-webkit-text-stroke:0.3px #1c1e22">APT</span><span style="font-size:12.500px;color:#9b9ea4;letter-spacing:0.5px">/USDT</span></div>
<div class="t" style="left:15px;top:674.5px;font-size:11.5px;color:#a9acb1;transform:translate(0,-50%);transform-origin:left center;letter-spacing:-0.1px">24H: 401760.18401</div>
<div class="t" style="left:193px;top:657.0px;font-size:16px;color:#ee4a5d;transform:translate(-50%,-50%);transform-origin:center center;font-weight:bold;letter-spacing:-0.45px">5.83800</div>
<div class="t" style="left:193px;top:674.5px;font-size:11.5px;color:#3a3d42;transform:translate(-50%,-50%);transform-origin:center center;letter-spacing:-0.15px">483.32277 INR</div>
<div class="abs" style="left:285px;top:649.0px;width:75px;height:30px;background:#ee4a5d;border-radius:4px"></div>
<div class="t" style="left:322.5px;top:664.5px;font-size:14.5px;color:#fff;transform:translate(-50%,-50%);transform-origin:center center;font-weight:bold;letter-spacing:-0.4px">-0.34%</div>
<div class="t" style="left:15px;top:723.5px;font-size:16.5px;color:#222;transform:translate(0,-50%) scaleX(0.88);transform-origin:left center;"><span style="font-size:16.500px;color:#1c1e22;-webkit-text-stroke:0.3px #1c1e22">AAVE</span><span style="font-size:12.500px;color:#9b9ea4;letter-spacing:0.5px">/USDT</span></div>
<div class="t" style="left:15px;top:741.5px;font-size:11.5px;color:#a9acb1;transform:translate(0,-50%);transform-origin:left center;letter-spacing:-0.1px">24H: 85206.53330</div>
<div class="t" style="left:193px;top:724.0px;font-size:16px;color:#25b794;transform:translate(-50%,-50%);transform-origin:center center;font-weight:bold;letter-spacing:-0.45px">224.04450</div>
<div class="t" style="left:193px;top:741.5px;font-size:11.5px;color:#3a3d42;transform:translate(-50%,-50%);transform-origin:center center;letter-spacing:-0.15px">18549.21200 INR</div>
<div class="abs" style="left:285px;top:716.0px;width:75px;height:30px;background:#25b794;border-radius:4px"></div>
<div class="t" style="left:322.5px;top:731.5px;font-size:14.5px;color:#fff;transform:translate(-50%,-50%);transform-origin:center center;font-weight:bold;letter-spacing:-0.4px">+1.20%</div>
<div class="abs" style="left:0px;top:722.5px;width:375px;height:92px;background:#fff;"></div>
<div class="t" style="left:37px;top:774.5px;font-size:12px;color:#7d8997;transform:translate(-50%,-50%);transform-origin:center center;"><span class="cj" style="width:24px;">首页</span></div>
<div class="t" style="left:112px;top:774.5px;font-size:12px;color:#2b6ef2;transform:translate(-50%,-50%);transform-origin:center center;"><span class="cj" style="width:24px;">行情</span></div>
<div class="t" style="left:187px;top:774.5px;font-size:12px;color:#7d8997;transform:translate(-50%,-50%);transform-origin:center center;"><span class="cj" style="width:24px;">交易</span></div>
<div class="t" style="left:262px;top:774.5px;font-size:12px;color:#7d8997;transform:translate(-50%,-50%);transform-origin:center center;"><span class="cj" style="width:24px;">合约</span></div>
<div class="t" style="left:337px;top:774.5px;font-size:12px;color:#7d8997;transform:translate(-50%,-50%);transform-origin:center center;"><span class="cj" style="width:24px;">资产</span></div>
<svg style="left:24px;top:741px" width="28" height="16" viewBox="0 0 28 16"><path d="M0.500 14.500L9 1.500c.5-.7 1.300-.7 1.800 0l8.200 13z" fill="#7d8997"/><path d="M13.300 5l2.300-3.300c.5-.7 1.400-.7 1.900 0L26.800 14.500h-5.600z" fill="#5e6b7a"/></svg>
<svg style="left:102px;top:740px" width="22" height="17" viewBox="0 0 22 17"><rect x="0.500" y="0.500" width="20.500" height="15.500" rx="2" fill="#2f6ef5"/><path d="M0.500 11.500l6-4.300 3.800 2.600L21 3.500V14a2 2 0 0 1-2 2H2.500a2 2 0 0 1-2-2z" fill="#2a5bd2"/><path d="M1 11.300l5.800-4.200 3.700 2.600L20.500 3.800" stroke="#fff" stroke-width="2" fill="none"/></svg>
<svg style="left:176px;top:740px" width="24" height="19" viewBox="0 0 24 19"><path d="M5.800 0.500L10.600 6.500H1z" fill="#7d8997"/><rect x="4.500" y="6" width="2.700" height="12" fill="#7d8997"/><path d="M17.200 18.500L12.400 12.500h9.600z" fill="#4d5a69"/><rect x="15.900" y="0.500" width="2.700" height="12.500" fill="#4d5a69"/></svg>
<svg style="left:252px;top:739px" width="22" height="20" viewBox="0 0 22 20"><path d="M3 0.500h11.500a2.500 2.500 0 0 1 2.500 2.500V19H3a2.500 2.500 0 0 1-2.500-2.500V3A2.500 2.500 0 0 1 3 0.500z" fill="#7d8997"/><path d="M4.500 5.800h8M4.500 9.300h4.500" stroke="#fff" stroke-width="1.700"/><path d="M17 19h1.200a2 2 0 0 0 2-2V9.500" stroke="#7d8997" stroke-width="1.500" fill="none"/></svg>
<svg style="left:327px;top:738px" width="22" height="20" viewBox="0 0 22 20"><path d="M6 5.500L16 0.800l2 4.700z" fill="#4d5a69"/><rect x="0.500" y="5" width="20.800" height="14.300" rx="2.200" fill="#7d8997"/><rect x="13.300" y="9.700" width="8" height="5" rx="1" fill="#fff"/><circle cx="16" cy="12.200" r="1.300" fill="#4d5a69"/></svg>
</div>
<div class="t" style="left:1231px;top:986.5px;font-size:16px;color:#f7752e;font-weight:bold;font-family:'Liberation Sans',sans-serif"><span style="display:inline-block;transform:scaleX(1.110);transform-origin:left">TG:anonsl23x,<span class="cj" style="width:64px;">系统开发</span></span></div>
<div class="abs" style="left:1px;top:807px;width:1057px;height:200px;background:#1f201b;"></div>
<div class="t" style="left:25px;top:829px;font-size:13.5px;color:#f0f0ea;letter-spacing:0.35px">wap - H5</div>
<div class="abs" style="left:18px;top:847px;width:87px;height:1px;background:#d0d0ca;"></div>
<svg style="left:879.5px;top:828px" width="14" height="14" viewBox="0 0 14 14" fill="none" stroke="#d8d8d2" stroke-width="1" stroke-linejoin="round"><path d="M3.700 6.700a3.300 3.300 0 0 1 6.600 0v3a3.300 3.300 0 0 1-6.600 0z"/><path d="M4.900 3.900a2.100 2.100 0 0 1 4.200 0M7 3.600v9.400M3.700 6.200L1.600 4.600M3.700 8.400H1.200M3.700 10.600l-2.100 1.700M10.300 6.200l2.100-1.600M10.300 8.400h2.500M10.300 10.600l2.100 1.700"/></svg>
<svg style="left:910.5px;top:829px" width="13" height="13" viewBox="0 0 13 13" fill="none" stroke="#d8d8d2" stroke-width="1" stroke-linejoin="round"><path d="M2.300 2.600A5.600 5.600 0 1 1 1 6.500"/><path d="M0.800 0.800v2.500h2.500"/><path d="M5.200 4.300L9 6.500 5.200 8.700z" fill="#d8d8d2"/></svg>
<svg style="left:941px;top:830px" width="12" height="12" viewBox="0 0 12 12"><rect x="0.500" y="0.500" width="11" height="11" fill="none" stroke="#d8d8d2"/><rect x="2.500" y="2.500" width="7" height="7" fill="#d8d8d2"/></svg>
<svg style="left:970px;top:829px" width="15" height="13" viewBox="0 0 15 13" fill="none" stroke="#d8d8d2" stroke-width="1" stroke-linejoin="round"><path d="M7 1.500H0.500v11h13V7.500"/><path d="M3 5.500l3 2-3 2M8 9.500h3M11.300 1v5M8.800 3.500h5"/></svg>
<svg style="left:1000px;top:832.5px" width="14" height="8" viewBox="0 0 13 8" fill="none" stroke="#d8d8d2" stroke-width="1" stroke-linejoin="round" stroke-width="1.500"><path d="M0.700 7.300L6.500 1l5.800 6.300"/></svg>
<svg style="left:1030px;top:831px" width="15" height="10" viewBox="0 0 15 10" fill="none" stroke="#d8d8d2" stroke-width="1" stroke-linejoin="round" stroke-width="1.200"><path d="M0.700 0.700l6.600 8.600M7.300 0.700L0.700 9.300M11.500 0.500v8.500M9.300 6.800l2.200 2.400 2.200-2.400"/></svg>
<div class="con"><div><span class="ts">21:54:15.034</span>   - Local:   <span class="lk">http://localhost:8080/</span></div><div><span class="ts">21:54:15.037</span>   - Network: <span class="lk">http://192.168.2.109:8080/</span></div><div><span class="ts">21:54:15.042</span> <span class="cj" style="font-size:16px;width:32.0px">项目</span> 'wap' <span class="cj" style="font-size:16px;width:416.0px">编译成功。前端运行日志，请另行在浏览器的控制台查看。</span></div><div><span class="ts">21:54:15.042</span> <span class="yl"><span class="cj" style="font-size:16px;width:128.0px">点击控制台右上角</span>debug<span class="cj" style="font-size:16px;width:512.0px">图标（虫子），可开启断点调试（添加断点：双击编辑器行号添加断点）</span></span></div><div><span class="ts">21:54:15.080</span> <span class="yl">H5<span class="cj" style="font-size:16px;width:130.4px">版常见问题参考：</span></span><span class="lk">https://ask.dcloud.net.cn/article/35232</span></div><div><span class="ts">21:54:16.031</span> [HMR] Waiting for update signal from WDS...</div><div><span class="ts">21:54:16.994</span> <span class="rd">[system]TypeError: Cannot read property 'find' of undefined</span></div></div>
<div class="abs" style="left:1050px;top:988px;width:8px;height:15px;background:#2b2c27;"></div>
<div class="abs" style="left:0px;top:1007px;width:1451px;height:21px;background:#545454;"></div>
<div class="abs" style="left:0px;top:1027px;width:1451px;height:5px;background:#dde1f1;"></div>
<svg style="left:29px;top:1012px" width="14" height="14" viewBox="0 0 14 14"><circle cx="7" cy="7" r="6.400" fill="none" stroke="#d0d0ca" stroke-width="1"/><circle cx="7" cy="5.300" r="2.300" fill="#d0d0ca"/><path d="M2.600 11.600C3 8.600 11 8.600 11.400 11.600A6 6 0 0 1 2.600 11.600z" fill="#d0d0ca"/></svg>
<div class="t" style="left:49px;top:1014px;font-size:12px;color:#e4e4de;"><span class="cj" style="width:36px;">未登录</span></div>
<svg style="left:145px;top:1013px" width="13" height="12" viewBox="0 0 13 12" fill="none" stroke="#d8d8d2" stroke-width="1"><rect x="0.500" y="1" width="2" height="2"/><rect x="0.500" y="5" width="2" height="2"/><rect x="0.500" y="9" width="2" height="2"/><path d="M4.500 2H13M4.500 6H13M4.500 10H13" stroke-width="1.200"/></svg>
<svg style="left:170px;top:1013px" width="14" height="12" viewBox="0 0 14 12" fill="none" stroke="#d8d8d2" stroke-width="1"><rect x="0.500" y="0.500" width="12.500" height="10.500"/><path d="M3 3.500l2.400 2L3 7.500M6.500 8h3.500"/></svg>
<svg style="left:195px;top:1012px" width="17" height="14" viewBox="0 0 17 14" fill="none" stroke="#d8d8d2" stroke-width="1"><path d="M5.500 12A5.800 5.800 0 1 1 12 4.500"/><path d="M0.800 6h5.500M6 0.800c-2 2-2.200 6-0.500 9M6.500 0.800c1 1 1.600 2.400 1.800 4"/><path d="M8.500 13h5.500a2 2 0 0 0 .3-4 3 3 0 0 0-5.800.8 1.700 1.700 0 0 0 0 3.200z"/></svg>
<div class="t" style="left:1065px;top:1014px;font-size:12px;color:#e4e4de;"><span class="cj" style="width:60px;">语法提示库</span></div>
<div class="t" style="left:1151.5px;top:1014px;font-size:12.5px;color:#e4e4de;"><span class="cj" style="width:12px;">行</span>:41</div>
<div class="t" style="left:1190.5px;top:1014px;font-size:12.5px;color:#e4e4de;"><span class="cj" style="width:12px;">列</span>:45</div>
<div class="t" style="left:1245px;top:1014px;font-size:12.5px;color:#e4e4de;letter-spacing:-0.2px">UTF-8</div>
<div class="t" style="left:1305px;top:1014px;font-size:12.5px;color:#e4e4de;letter-spacing:0.05px">JavaScript</div>
<svg style="left:1380px;top:1011px" width="17" height="16" viewBox="0 0 17 16"><circle cx="7" cy="9" r="6.300" fill="#f4f4f0"/><path d="M7 5.500v6M4.600 9.300L7 11.800l2.400-2.500" stroke="#333" stroke-width="1.200" fill="none"/><circle cx="13" cy="3.500" r="2.600" fill="#e8402a"/></svg>
<svg style="left:1411px;top:1012px" width="13" height="14" viewBox="0 0 13 14"><path d="M6.500 0.500c.6 0 1 .4 1 1C10 2.200 11 4.200 11 6.500c0 2.500.8 3.500 1.600 4.300v.7H.4v-.7C1.200 10 2 9 2 6.500c0-2.300 1-4.300 3.500-5 0-.6.400-1 1-1zM5 12.300h3a1.500 1.500 0 0 1-3 0z" fill="#b3a37a"/></svg>
</body></html>
